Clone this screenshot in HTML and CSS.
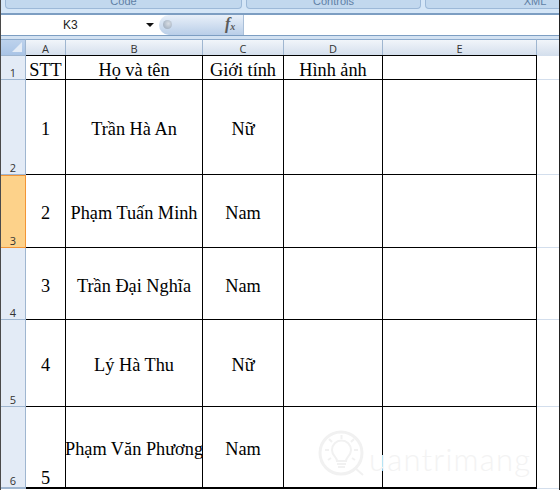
FILE: index.html
```html
<!DOCTYPE html>
<html lang="vi">
<head>
    <meta charset="UTF-8">
    <meta name="viewport" content="width=device-width, initial-scale=1.0">
    <title>Danh sách</title>
    <link rel="stylesheet" href="styles.css">
</head>
<body>
    <div class="ribbon">
        <div class="group group-code">Code</div>
        <div class="group group-controls">Controls</div>
        <div class="group group-xml">XML</div>
    </div>
    <div class="formula-bar">
        <div class="name-box">
            <span class="cell-name">K3</span>
            <span class="name-arrow"></span>
        </div>
        <div class="fx-box">
            <span class="fx-knob"></span>
            <span class="fx-label">f<sub>x</sub></span>
        </div>
        <div class="formula-input"></div>
    </div>
    <div class="sheet">
        <div class="corner"><span class="corner-mark"></span></div>
        <div class="col-head">A</div>
        <div class="col-head">B</div>
        <div class="col-head">C</div>
        <div class="col-head">D</div>
        <div class="col-head">E</div>
        <div class="col-head col-rest"></div>

        <div class="row-head">1</div>
        <div class="cell first-row">STT</div>
        <div class="cell first-row">Họ và tên</div>
        <div class="cell first-row">Giới tính</div>
        <div class="cell first-row">Hình ảnh</div>
        <div class="cell first-row"></div>
        <div class="rest"></div>

        <div class="row-head">2</div>
        <div class="cell">1</div>
        <div class="cell">Trần Hà An</div>
        <div class="cell">Nữ</div>
        <div class="cell"></div>
        <div class="cell"></div>
        <div class="rest"></div>

        <div class="row-head active">3</div>
        <div class="cell">2</div>
        <div class="cell">Phạm Tuấn Minh</div>
        <div class="cell">Nam</div>
        <div class="cell"></div>
        <div class="cell"></div>
        <div class="rest"></div>

        <div class="row-head">4</div>
        <div class="cell">3</div>
        <div class="cell">Trần Đại Nghĩa</div>
        <div class="cell">Nam</div>
        <div class="cell"></div>
        <div class="cell"></div>
        <div class="rest"></div>

        <div class="row-head">5</div>
        <div class="cell">4</div>
        <div class="cell">Lý Hà Thu</div>
        <div class="cell">Nữ</div>
        <div class="cell"></div>
        <div class="cell"></div>
        <div class="rest"></div>

        <div class="row-head last-head">6</div>
        <div class="cell last-row bottom">5</div>
        <div class="cell last-row">Phạm Văn Phương</div>
        <div class="cell last-row">Nam</div>
        <div class="cell last-row"></div>
        <div class="cell last-row"></div>
        <div class="rest"></div>
    </div>
    <div class="watermark">
        <svg class="watermark-icon" width="50" height="50" viewBox="0 0 50 50" fill="none" stroke="#f1f1f1" stroke-width="2">
            <circle cx="24" cy="24" r="21" stroke-width="3"/>
            <path d="M38 39l8 7"/>
            <path d="M20 32c0-4-5-5-5-11a9.500 9.500 0 0 1 19 0c0 6-5 7-5 11z"/>
            <path d="M20 35h9M21 38h7"/>
            <path d="M24.500 6v4M12 10l3 3M37 10l-3 3M8 21h4M37 21h4M11 31l3-2M38 31l-3-2"/>
        </svg>
        <span class="watermark-text">uantrimang</span>
    </div>
</body>
</html>
```

FILE: styles.css
```css
html, body {
    margin: 0;
    padding: 0;
}

body {
    position: relative;
    width: 560px;
    height: 490px;
    box-sizing: border-box;
    overflow: hidden;
    background-color: #ffffff;
    border-left: 1px solid #4a4a4a;
    border-right: 1px solid #222222;
    font-family: "Liberation Sans", Arial, sans-serif;
}

.ribbon {
    display: flex;
    gap: 4px;
    height: 15px;
    box-sizing: border-box;
    overflow: hidden;
    padding-left: 4px;
    background-color: #d5e6f7;
    border-bottom: 2px solid #7d9ec2;
}

.group {
    flex: none;
    height: 9px;
    line-height: 2px;
    box-sizing: border-box;
    background-color: #c2d8ee;
    border: 1px solid #9db9d8;
    border-top: none;
    border-radius: 0 0 4px 4px;
    color: #5f7fa5;
    font-size: 11px;
    text-align: center;
    overflow: hidden;
}

.group-code {
    width: 237px;
}

.group-controls {
    width: 175px;
}

.group-xml {
    width: 220px;
}

.formula-bar {
    display: flex;
    height: 21px;
    box-sizing: border-box;
    background-color: #ffffff;
    border-bottom: 1px solid #7d9ec2;
}

.name-box {
    display: flex;
    align-items: center;
    width: 158px;
    flex: none;
    font-size: 12px;
    color: #222222;
}

.cell-name {
    margin-left: 62px;
}

.name-arrow {
    margin-left: 68px;
    border-left: 4px solid transparent;
    border-right: 4px solid transparent;
    border-top: 4px solid #111111;
}

.fx-box {
    position: relative;
    width: 85px;
    flex: none;
    box-sizing: border-box;
    background: linear-gradient(#e9f0f9, #b9cee8);
    border-right: 1px solid #a9bfd8;
    border-radius: 10px 0 0 10px;
}

.fx-knob {
    position: absolute;
    left: 4px;
    top: 5px;
    width: 9px;
    height: 9px;
    border-radius: 50%;
    background: radial-gradient(circle at 60% 40%, #d8dde4, #93a3b6);
}

.fx-label {
    position: absolute;
    left: 66px;
    top: 0;
    font-family: "Liberation Serif", serif;
    font-style: italic;
    font-weight: bold;
    font-size: 16px;
    color: #5a5a5a;
}

.fx-label sub {
    font-size: 10px;
    vertical-align: -1px;
}

.formula-input {
    flex: 1;
}

.sheet {
    display: grid;
    grid-template-columns: 25px 40px 137px 81px 99px 154px 1fr;
    grid-template-rows: 17px 24px 95px 73px 72px 87px 82px;
    padding-top: 3px;
    background: linear-gradient(#d3e2f2 3px, transparent 3px);
    font-family: "Liberation Serif", "Times New Roman", serif;
    font-size: 18.3px;
    line-height: 18px;
    color: #000000;
}

.corner {
    display: flex;
    align-items: flex-end;
    justify-content: flex-end;
    box-sizing: border-box;
    padding: 0 3px 3px 0;
    background: linear-gradient(#bdd2ec, #a9c4e6);
    border-top: 1px solid #8dabcd;
    border-right: 1px solid #9fb6d0;
    border-bottom: 1px solid #9fb6d0;
}

.corner-mark {
    width: 0;
    height: 0;
    border-left: 10px solid transparent;
    border-bottom: 10px solid #e4ecf6;
}

.col-head {
    display: flex;
    align-items: center;
    justify-content: center;
    box-sizing: border-box;
    padding-top: 2px;
    background: linear-gradient(#f1f5fa, #d3deec);
    border-top: 1px solid #8dabcd;
    border-right: 1px solid #9fb6d0;
    font-family: "Open Sans", "Liberation Sans", sans-serif;
    font-size: 11px;
    color: #333333;
}

.col-rest {
    border-right: none;
}

.row-head {
    display: flex;
    align-items: flex-end;
    justify-content: center;
    box-sizing: border-box;
    background-color: #e3ebf6;
    border-right: 1px solid #9fb6d0;
    border-bottom: 1px solid #9fb6d0;
    font-family: "Open Sans", "Liberation Sans", sans-serif;
    font-size: 11px;
    line-height: 12px;
    color: #333333;
}

.row-head.active {
    background-color: #fdd28a;
    border-right-color: #f29536;
    border-bottom-color: #f29536;
    border-top: 1px solid #f29536;
}

.last-head {
    border-bottom-width: 2px;
}

.cell {
    display: flex;
    align-items: center;
    justify-content: center;
    box-sizing: border-box;
    min-width: 0;
    padding-top: 4px;
    white-space: nowrap;
    overflow: hidden;
    border-right: 1px solid #000000;
    border-bottom: 1px solid #000000;
}

.first-row {
    padding-top: 5px;
    border-top: 1px solid #000000;
    margin-top: -1px;
}

.last-row {
    border-bottom-width: 2px;
}

.bottom {
    align-items: flex-end;
}

.rest {
    border-bottom: 1px solid #d3deec;
}

.watermark {
    position: absolute;
    left: 316px;
    top: 429px;
    display: flex;
    align-items: center;
    pointer-events: none;
}

.watermark-text {
    margin-left: 2px;
    margin-top: 10px;
    font-family: "Lato", sans-serif;
    font-weight: 300;
    font-size: 31px;
    letter-spacing: 1.2px;
    color: #f3f3f3;
}
```
